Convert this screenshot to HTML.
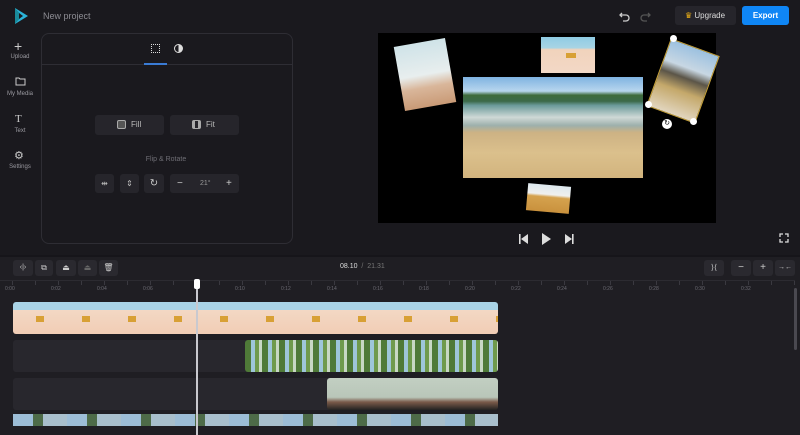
<!DOCTYPE html>
<html><head><meta charset="utf-8"><style>
*{margin:0;padding:0;box-sizing:border-box}
body{width:800px;height:435px;background:#1a191e;font-family:"Liberation Sans",sans-serif;overflow:hidden;position:relative;color:#c9c9cf}
.a{position:absolute}
.lbl{font-size:6px;color:#9a99a0;text-align:center;width:40px}
.btn{background:#26252b;border-radius:3px}
.tb{background:#2a292f;border-radius:3px;top:260px;height:16px}
.rl{font-size:5px;color:#6b6a72;top:286px}
.beach{background:linear-gradient(#a9d3e6 0,#a9d3e6 25%,#f3d8c4 25%,#f1cdb5 100%)}
</style></head><body>
<svg class="a" style="left:13px;top:7px" width="16" height="18" viewBox="0 0 16 18"><path d="M2 1 L15 9 L2 17 Z" fill="#2bb3d9"/><path d="M2 1 L9 9 L2 17 Z" fill="#1a8a9a"/><path d="M6 6 L10 9 L6 12Z" fill="#1a191e"/></svg>
<div class="a" style="left:43px;top:11px;font-size:9px;color:#8d8c93">New project</div>
<svg class="a" style="left:619px;top:10px" width="12" height="12" viewBox="0 0 12 12"><path d="M3 3 L1 5 L3 7 M1 5 H7 A3 3 0 0 1 7 11 H4" fill="none" stroke="#ccc" stroke-width="1.3"/></svg>
<svg class="a" style="left:639px;top:10px" width="12" height="12" viewBox="0 0 12 12"><path d="M9 3 L11 5 L9 7 M11 5 H5 A3 3 0 0 0 5 11 H8" fill="none" stroke="#555" stroke-width="1.3"/></svg>
<div class="a btn" style="left:675px;top:6px;width:61px;height:19px;font-size:8px;line-height:19px;color:#ddd;padding-left:10px"><span style="color:#f2b416">♛</span> Upgrade</div>
<div class="a" style="left:742px;top:6px;width:47px;height:19px;background:#0f86f5;border-radius:3px;font-size:8px;line-height:19px;text-align:center;color:#fff;font-weight:bold">Export</div>
<div class="a" style="left:14px;top:38px;font-size:14px;color:#ccc">+</div><div class="a lbl" style="left:0;top:54px">Upload</div>
<svg class="a" style="left:15px;top:77px" width="11" height="9"><path d="M1 1h3l1 1h5v6H1z" fill="none" stroke="#ccc"/></svg><div class="a lbl" style="left:0;top:91px">My Media</div>
<div class="a" style="left:15px;top:113px;font-size:11px;color:#ccc;font-family:'Liberation Serif'">T</div><div class="a lbl" style="left:0;top:128px">Text</div>
<div class="a" style="left:14px;top:149px;font-size:11px;color:#ccc">⚙</div><div class="a lbl" style="left:0;top:164px">Settings</div>
<div class="a" style="left:41px;top:33px;width:252px;height:211px;border:1px solid #2e2d34;border-radius:8px"></div>
<div class="a" style="left:41px;top:64px;width:252px;height:1px;background:#2e2d34"></div>
<div class="a" style="left:144px;top:63px;width:23px;height:2px;background:#3a7bd5"></div>
<div class="a" style="left:151px;top:44px;width:9px;height:9px;border:1.5px dotted #ddd"></div>
<div class="a" style="left:174px;top:44px;width:9px;height:9px;border:1.3px solid #ddd;border-radius:50%;background:linear-gradient(90deg,transparent 50%,#ddd 50%)"></div>
<div class="a btn" style="left:95px;top:115px;width:69px;height:20px"></div>
<div class="a" style="left:117px;top:120px;width:9px;height:9px;border:1px solid #aaa;background:#555;border-radius:2px"></div>
<div class="a" style="left:131px;top:115px;font-size:8px;line-height:20px;color:#bbb">Fill</div>
<div class="a btn" style="left:170px;top:115px;width:69px;height:20px"></div>
<div class="a" style="left:192px;top:120px;width:9px;height:9px;border:1px solid #aaa;border-radius:2px;border-left-width:3px;border-right-width:3px"></div>
<div class="a" style="left:206px;top:115px;font-size:8px;line-height:20px;color:#bbb">Fit</div>
<div class="a" style="left:120px;top:156px;width:92px;text-align:center;font-size:7px;color:#6f6e75">Flip &amp; Rotate</div>
<div class="a btn" style="left:95px;top:174px;width:19px;height:19px;font-size:8px;text-align:center;line-height:19px;color:#bbb">⇹</div>
<div class="a btn" style="left:120px;top:174px;width:19px;height:19px;font-size:8px;text-align:center;line-height:19px;color:#bbb">⇕</div>
<div class="a btn" style="left:144px;top:174px;width:20px;height:19px;font-size:10px;text-align:center;line-height:19px;color:#ccc">↻</div>
<div class="a btn" style="left:170px;top:174px;width:69px;height:19px;font-size:7px;line-height:19px;color:#999"><span class="a" style="left:7px;font-size:10px;color:#ccc">−</span><span class="a" style="left:30px">21°</span><span class="a" style="left:56px;font-size:10px;color:#ccc">+</span></div>
<div class="a" style="left:378px;top:33px;width:338px;height:190px;background:#000"></div>
<div class="a" style="left:399px;top:42px;width:52px;height:65px;transform:rotate(-10deg);background:linear-gradient(#cfe3e8,#e8eeee 50%,#d9b69a 70%,#c99a76)"></div>
<div class="a" style="left:541px;top:37px;width:54px;height:36px;background:linear-gradient(#8fcbe3 0,#a8d4e4 30%,#f1d3bc 35%,#f2d8c6)"></div>
<div class="a" style="left:566px;top:53px;width:10px;height:5px;background:#d8a035"></div>
<div class="a" style="left:463px;top:77px;width:180px;height:101px;background:linear-gradient(#7fb3e0 0,#b8d6ee 14%,#3f6b3c 18%,#3c6a4a 24%,#6a9a9a 28%,#cfd9d6 40%,#9db0ac 48%,#cdb284 55%,#dbc08c 75%,#d2b47e)"></div>
<div class="a" style="left:527px;top:185px;width:43px;height:27px;transform:rotate(5deg);background:linear-gradient(#dde8ee,#f0f0ee 35%,#d5a24e 45%,#c9913d)"></div>
<div class="a" style="left:657px;top:45px;width:52px;height:72px;transform:rotate(20deg);border:1px solid #c8a33a;background:linear-gradient(#9cc1e0,#c8d7e3 30%,#5b5548 45%,#c4a86a 65%,#e2d6bf)"></div>
<div class="a" style="left:670px;top:35px;width:7px;height:7px;border-radius:50%;background:#fff"></div>
<div class="a" style="left:645px;top:101px;width:7px;height:7px;border-radius:50%;background:#fff"></div>
<div class="a" style="left:690px;top:118px;width:7px;height:7px;border-radius:50%;background:#fff"></div>
<div class="a" style="left:662px;top:119px;width:10px;height:10px;border-radius:50%;background:#fff;font-size:7px;color:#000;text-align:center;line-height:10px">↻</div>
<svg class="a" style="left:517px;top:233px" width="60" height="13" viewBox="0 0 60 13"><rect x="2" y="1" width="1.6" height="10" fill="#ddd"/><path d="M11 1 L4 6 L11 11Z" fill="#ddd"/><path d="M25 0 L34 6 L25 12Z" fill="#ddd"/><path d="M48 1 L55 6 L48 11Z" fill="#ddd"/><rect x="55" y="1" width="1.6" height="10" fill="#ddd"/></svg>
<svg class="a" style="left:779px;top:233px" width="10" height="10"><path d="M1 4V1h3M6 1h3v3M9 6v3H6M4 9H1V6" fill="none" stroke="#ddd" stroke-width="1.3"/></svg>
<div class="a" style="left:0;top:255px;width:800px;height:180px;background:#1f1e23"></div>
<div class="a" style="left:0;top:255px;width:800px;height:2px;background:#16151a"></div>
<div class="a tb" style="left:13px;width:20px;font-size:7px;color:#ccc;text-align:center;line-height:16px">‹|›</div>
<div class="a tb" style="left:35px;width:18px;font-size:8px;color:#ccc;text-align:center;line-height:16px">⧉</div>
<div class="a tb" style="left:56px;width:20px;font-size:8px;color:#ccc;text-align:center;line-height:16px">⏏</div>
<div class="a tb" style="left:78px;width:19px;font-size:8px;color:#666;text-align:center;line-height:16px">⏏</div>
<div class="a tb" style="left:99px;width:19px;font-size:8px;color:#ccc;text-align:center;line-height:16px">🗑</div>
<div class="a" style="left:340px;top:263px;font-size:7px;color:#ddd">08.10 <span style="color:#777">&nbsp;/ &nbsp;21.31</span></div>
<div class="a tb" style="left:704px;width:20px;font-size:8px;color:#ccc;text-align:center;line-height:16px">⟩⟨</div>
<div class="a tb" style="left:731px;width:20px;font-size:10px;color:#ccc;text-align:center;line-height:16px">−</div>
<div class="a tb" style="left:753px;width:20px;font-size:10px;color:#ccc;text-align:center;line-height:16px">+</div>
<div class="a tb" style="left:775px;width:20px;font-size:7px;color:#ccc;text-align:center;line-height:16px">→←</div>
<div class="a" style="left:0;top:280px;width:795px;height:1px;background:#2c2b31"></div>
<div class="a" style="left:0;top:281px;width:795px;height:4px;background:repeating-linear-gradient(90deg,#3a3940 0 1px,transparent 1px 23px);background-position:12px 0"></div>
<div class="a rl" style="left:5px">0:00</div><div class="a rl" style="left:51px">0:02</div><div class="a rl" style="left:97px">0:04</div><div class="a rl" style="left:143px">0:06</div><div class="a rl" style="left:235px">0:10</div><div class="a rl" style="left:281px">0:12</div><div class="a rl" style="left:327px">0:14</div><div class="a rl" style="left:373px">0:16</div><div class="a rl" style="left:419px">0:18</div><div class="a rl" style="left:465px">0:20</div><div class="a rl" style="left:511px">0:22</div><div class="a rl" style="left:557px">0:24</div><div class="a rl" style="left:603px">0:26</div><div class="a rl" style="left:649px">0:28</div><div class="a rl" style="left:695px">0:30</div><div class="a rl" style="left:741px">0:32</div>
<div class="a" style="left:794px;top:288px;width:3px;height:62px;background:#4a4950;border-radius:2px"></div>
<div class="a beach" style="left:13px;top:302px;width:485px;height:32px;border-radius:3px;background-size:46px 100%"></div>
<div class="a" style="left:13px;top:302px;width:485px;height:32px;background:repeating-linear-gradient(90deg,transparent 0 23px,#d8a035 23px 31px,transparent 31px 46px);background-size:46px 6px;background-repeat:repeat-x;background-position:0 14px"></div>
<div class="a" style="left:13px;top:340px;width:485px;height:32px;background:#28272d;border-radius:3px"></div>
<div class="a" style="left:245px;top:340px;width:253px;height:32px;border-radius:3px;background:repeating-linear-gradient(90deg,#4f7a38 0 6px,#9ec6d9 6px 10px,#6f9a4c 10px 14px,#c8d8c4 14px 17px)"></div>
<div class="a" style="left:13px;top:378px;width:485px;height:32px;background:#28272d;border-radius:3px"></div>
<div class="a" style="left:327px;top:378px;width:171px;height:32px;border-radius:3px;background:linear-gradient(#c2cfc2,#b9c6b9 60%,#7a5a4a 75%,#222 100%)"></div>
<div class="a" style="left:13px;top:414px;width:485px;height:12px;background:repeating-linear-gradient(90deg,#9cbdd6 0 20px,#4d6b48 20px 30px,#a8bfcc 30px 54px)"></div>
<div class="a" style="left:196px;top:287px;width:1.5px;height:148px;background:#c9c9cf"></div>
<div class="a" style="left:194px;top:279px;width:6px;height:10px;background:#fff;border-radius:2px"></div>
</body></html>
